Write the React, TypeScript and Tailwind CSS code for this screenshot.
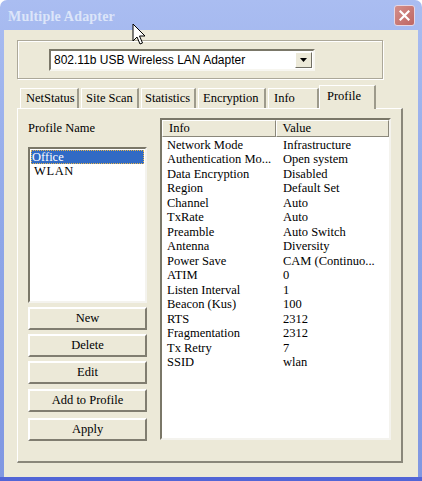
const SERIF = "font-['Liberation_Serif',serif]";

const TABS = [
  { label: "NetStatus", w: "w-[59px]", pl: "pl-[5px]" },
  { label: "Site Scan", w: "w-[58px]", pl: "pl-[4px]" },
  { label: "Statistics", w: "w-[55px]", pl: "pl-[3px]" },
  { label: "Encryption", w: "w-[68px]", pl: "pl-[4px]" },
  { label: "Info", w: "w-[51px]", pl: "pl-[5px]" },
];

const ROWS: [string, string][] = [
  ["Network Mode", "Infrastructure"],
  ["Authentication Mo...", "Open system"],
  ["Data Encryption", "Disabled"],
  ["Region", "Default Set"],
  ["Channel", "Auto"],
  ["TxRate", "Auto"],
  ["Preamble", "Auto Switch"],
  ["Antenna", "Diversity"],
  ["Power Save", "CAM (Continuo..."],
  ["ATIM", "0"],
  ["Listen Interval", "1"],
  ["Beacon (Kus)", "100"],
  ["RTS", "2312"],
  ["Fragmentation", "2312"],
  ["Tx Retry", "7"],
  ["SSID", "wlan"],
];

const BUTTONS = [
  { label: "New", mt: "mt-[4px]" },
  { label: "Delete", mt: "mt-[4px]" },
  { label: "Edit", mt: "mt-[4px]" },
  { label: "Add to Profile", mt: "mt-[5px]" },
  { label: "Apply", mt: "mt-[6px]" },
];

function Cursor() {
  return (
    <svg
      className="absolute left-[132px] top-[23px]"
      width="14"
      height="24"
      viewBox="0 0 14 24"
    >
      <path
        d="M1 1 L1 18 L5 14 L8 21 L10.5 20 L7.5 13 L13 13 Z"
        fill="white"
        stroke="black"
        strokeWidth="1"
      />
    </svg>
  );
}

export default function App() {
  return (
    <div className="relative h-[481px] w-[422px] overflow-hidden bg-white">
      <div className="flex h-full flex-col rounded-t-[7px] border-b-4 border-[#5265D6] bg-gradient-to-b from-[#AABDF1] via-[#8EA6E8] to-[#8097E2] px-[4px]">
        {/* title bar */}
        <div className="flex h-[30px] shrink-0 items-center justify-between pl-[4px] pr-[3px]">
          <span
            className={`${SERIF} pt-[3px] text-[14px] font-bold tracking-[0.2px] text-[#DCE5F9]`}
          >
            Multiple Adapter
          </span>
          <div className="flex h-[21px] w-[21px] items-center justify-center rounded-[3px] border border-[#E6D6E2] bg-gradient-to-br from-[#D48E8A] to-[#BE6662]">
            <svg width="11" height="11" viewBox="0 0 11 11">
              <path
                d="M1.5 1.5 L9.5 9.5 M9.5 1.5 L1.5 9.5"
                stroke="white"
                strokeWidth="2.2"
                strokeLinecap="square"
              />
            </svg>
          </div>
        </div>

        {/* client */}
        <div className="flex-1 bg-[#ECE9D8] pl-[13px] pt-[10px]">
          {/* adapter group */}
          <div className="h-[39px] w-[366px] border border-[#ACA899] shadow-[inset_1px_1px_0_white,1px_1px_0_white]">
            <div className="ml-[31px] mt-[8px] flex h-[22px] w-[266px] items-center border-2 border-t-[#7A7768] border-l-[#7A7768] border-b-[#F7F6F0] border-r-[#F7F6F0] bg-white">
              <span className="flex-1 pl-[3px] font-['Liberation_Sans',sans-serif] text-[12px] leading-none text-black">
                802.11b USB Wireless LAN Adapter
              </span>
              <div className="mr-[1px] flex h-[16px] w-[17px] items-center justify-center border border-t-white border-l-white border-b-[#716F64] border-r-[#716F64] bg-[#ECE9D8]">
                <svg width="7" height="4" viewBox="0 0 7 4">
                  <path d="M0 0 H7 L3.5 4 Z" fill="black" />
                </svg>
              </div>
            </div>
          </div>

          {/* tabs */}
          <div className="mt-[7px] flex h-[22px] items-end pl-[3px]">
            {TABS.map((t) => (
              <div
                key={t.label}
                className={`${t.w} ${t.pl} ${SERIF} mr-[2px] h-[20px] border-l border-t border-r-2 border-l-white border-t-white border-r-[#9D9A8B] text-[12.5px] leading-[19px] text-black`}
              >
                {t.label}
              </div>
            ))}
            <div
              className={`${SERIF} relative z-10 mb-[-1px] ml-[-2px] h-[24px] w-[57px] border-l border-t border-r-2 border-l-white border-t-white border-r-[#9D9A8B] bg-[#ECE9D8] pl-[7px] text-[12.5px] leading-[20px] text-black`}
            >
              Profile
            </div>
          </div>

          {/* panel */}
          <div className="flex h-[355px] w-[386px] border-l border-t border-r-2 border-b-2 border-l-white border-t-white border-r-[#8A877A] border-b-[#8A877A]">
            {/* left column */}
            <div className="ml-[10px] flex w-[119px] flex-col">
              <div className={`${SERIF} mt-[11px] h-[16px] text-[12.5px] leading-[16px] text-black`}>
                Profile Name
              </div>
              <div className="mt-[11px] h-[156px] border-2 border-t-[#7A7768] border-l-[#7A7768] border-b-[#F4F3EE] border-r-[#F4F3EE] bg-white px-[1px] pt-[1px]">
                <div
                  className={`${SERIF} h-[14px] bg-[#316AC5] pl-[1px] text-[12.5px] leading-[14px] text-white outline-1 outline-dotted outline-offset-[-1px] outline-[#E8B64A]`}
                >
                  Office
                </div>
                <div className={`${SERIF} h-[14px] pl-[3px] text-[12.5px] leading-[14px] tracking-[0.6px] text-black`}>
                  WLAN
                </div>
              </div>
              {BUTTONS.map((b) => (
                <div
                  key={b.label}
                  className={`${b.mt} ${SERIF} flex h-[23px] items-center justify-center border-2 border-t-white border-l-white border-b-[#807D70] border-r-[#807D70] bg-[#ECE9D8] text-[12.5px] text-black`}
                >
                  {b.label}
                </div>
              ))}
            </div>

            {/* list view */}
            <div className="ml-[13px] mt-[9px] h-[322px] w-[231px] border-2 border-t-[#7A7768] border-l-[#7A7768] border-b-[#F4F3EE] border-r-[#F4F3EE] bg-white">
              <div className={`${SERIF} flex h-[17px] text-[12.5px] leading-[15px] text-black`}>
                <div className="w-[114px] border border-t-white border-l-white border-b-[#8A877A] border-r-[#8A877A] bg-[#ECE9D8] pl-[6px]">
                  Info
                </div>
                <div className="w-[114px] border border-t-white border-l-white border-b-[#8A877A] border-r-[#8A877A] bg-[#ECE9D8] pl-[6px]">
                  Value
                </div>
              </div>
              <div className="pt-[1px]">
                {ROWS.map(([k, v]) => (
                  <div
                    key={k}
                    className={`${SERIF} flex h-[14.47px] text-[12.5px] leading-[14.47px] text-black`}
                  >
                    <span className="w-[115px] truncate pl-[5px]">{k}</span>
                    <span className="pl-[6px]">{v}</span>
                  </div>
                ))}
              </div>
            </div>
          </div>
        </div>
      </div>
      <Cursor />
    </div>
  );
}
